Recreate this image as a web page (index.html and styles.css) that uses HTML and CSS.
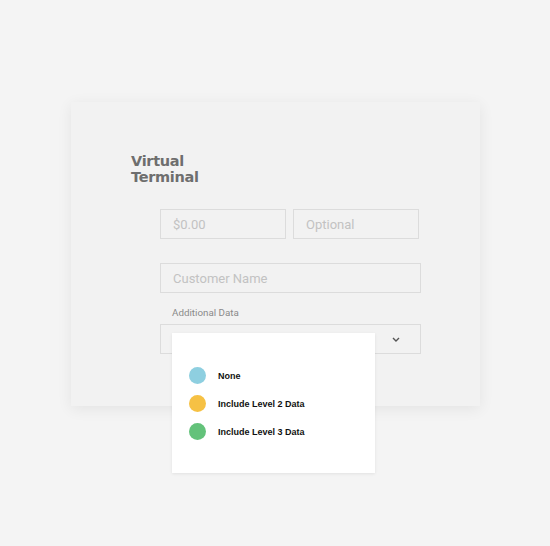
FILE: index.html
```html
<!DOCTYPE html>
<html lang="en">
<head>
    <meta charset="UTF-8">
    <meta name="viewport" content="width=device-width, initial-scale=1.0">
    <title>Virtual Terminal</title>
    <link rel="stylesheet" href="styles.css">
</head>
<body>
    <div class="card">
        <h2 class="title">Virtual<br>Terminal</h2>
        <form class="form">
            <div class="row">
                <input type="text" class="field half" placeholder="$0.00">
                <input type="text" class="field half" placeholder="Optional">
            </div>
            <input type="text" class="field wide name" placeholder="Customer Name">
            <label class="label">Additional Data</label>
            <div class="select-wrap">
                <div class="field wide select">
                    <svg class="chevron" width="8" height="5" viewBox="0 0 8 5">
                        <polyline points="1,1 4,4 7,1" fill="none" stroke="#555" stroke-width="1.4"/>
                    </svg>
                </div>
                <ul class="menu">
                    <li class="option"><span class="dot blue"></span>None</li>
                    <li class="option"><span class="dot yellow"></span>Include Level 2 Data</li>
                    <li class="option"><span class="dot green"></span>Include Level 3 Data</li>
                </ul>
            </div>
        </form>
    </div>
</body>
</html>
```

FILE: styles.css
```css
* {
    margin: 0;
    padding: 0;
    box-sizing: border-box;
}

body {
    background-color: #f4f4f4;
    font-family: Roboto, "Liberation Sans", Arial, sans-serif;
    height: 546px;
    overflow: hidden;
}

.card {
    margin: 102px 0 0 71px;
    width: 409px;
    height: 304px;
    background: #f2f2f2;
    padding: 51px 0 0 60px;
    box-shadow: 0 3px 14px rgba(0, 0, 0, 0.07);
}

.title {
    font-family: "DejaVu Sans", sans-serif;
    font-size: 14.5px;
    line-height: 16px;
    letter-spacing: -0.3px;
    font-weight: bold;
    color: #6e6e6e;
}

.form {
    margin: 24px 0 0 29px;
    display: flex;
    flex-direction: column;
}

.row {
    display: flex;
    gap: 7px;
}

.field {
    height: 30px;
    border: 1px solid #dcdcdc;
    background: #f2f2f2;
    padding: 0 12px;
    font-family: Roboto, sans-serif;
    font-size: 13px;
    color: #999;
    outline: none;
}

.field::placeholder {
    color: #c2c2c2;
}

.half {
    width: 126px;
}

.wide {
    width: 261px;
}

.name {
    margin-top: 24px;
}

.label {
    margin: 14px 0 0 12px;
    font-size: 9.8px;
    line-height: 12px;
    color: #8a8a8a;
}

.select-wrap {
    position: relative;
    margin-top: 5px;
}

.select {
    display: flex;
    justify-content: flex-end;
    align-items: center;
    padding-right: 20px;
}

.menu {
    position: absolute;
    left: 12px;
    top: 9px;
    width: 203px;
    height: 140px;
    background: #fff;
    list-style: none;
    padding: 34px 0 0 17px;
    box-shadow: 0 1px 3px rgba(0, 0, 0, 0.08);
}

.option {
    display: flex;
    align-items: center;
    gap: 12px;
    height: 17px;
    margin-bottom: 11px;
    font-family: "Liberation Sans", Arial, sans-serif;
    font-weight: bold;
    font-size: 9px;
    color: #111;
}

.dot {
    width: 17px;
    height: 17px;
    border-radius: 50%;
}

.blue {
    background: #8ecfe0;
}

.yellow {
    background: #f6c144;
}

.green {
    background: #63c27a;
}
```
